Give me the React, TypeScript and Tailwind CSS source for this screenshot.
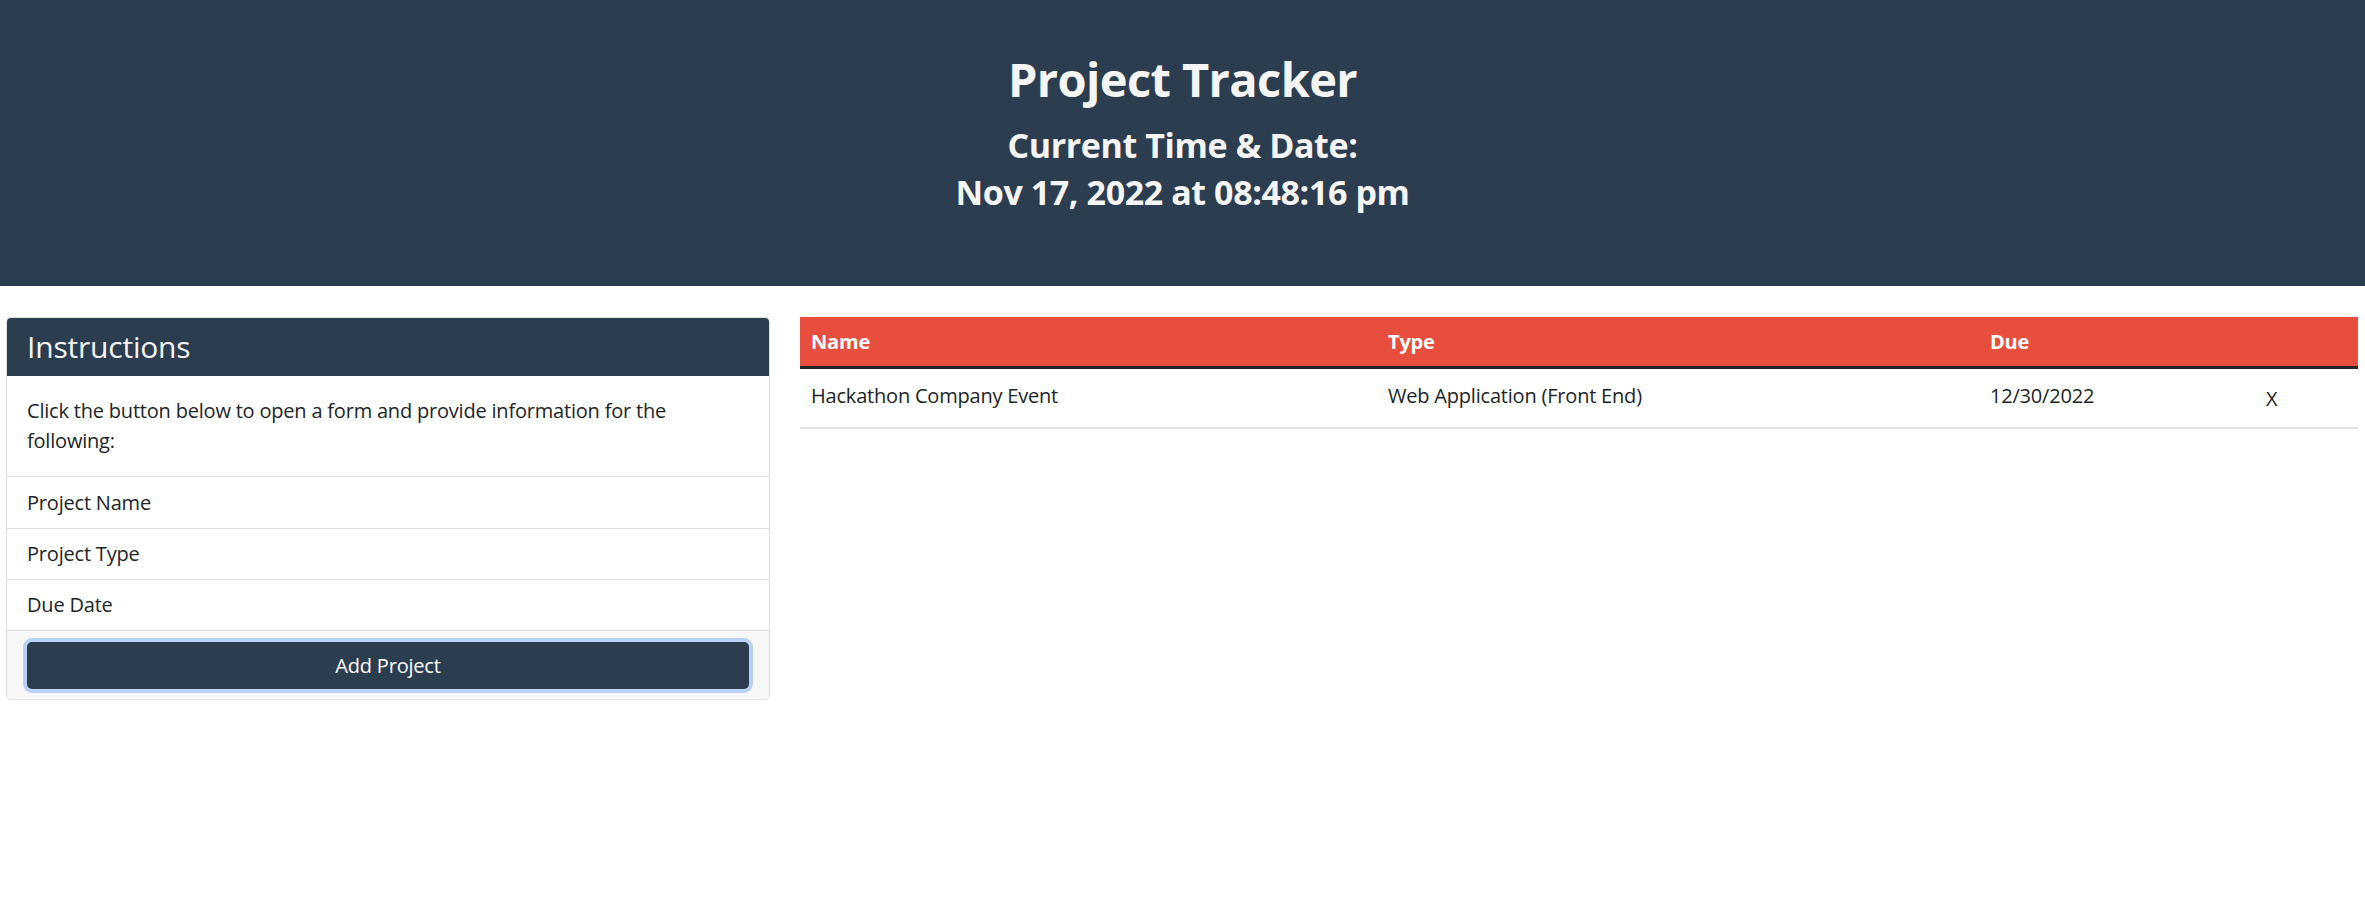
import React from "react";

export default function App() {
  const font = { fontFamily: '"Open Sans", "Noto Sans", sans-serif' };
  return (
    <div className="min-h-[908px] bg-white text-[#212529]" style={font}>
      <header className="h-[286px] bg-[#2d3d50] text-[#f5f5f5] flex flex-col items-center pt-[48px]">
        <h1 className="text-[47px] font-bold leading-[62px] tracking-[-0.6px]">Project Tracker</h1>
        <h2 className="text-[34px] font-bold leading-[46px] mt-[12px] tracking-[-0.4px]">Current Time &amp; Date:</h2>
        <h2 className="text-[34px] font-bold leading-[48px] tracking-[-0.4px]">Nov 17, 2022 at 08:48:16 pm</h2>
      </header>
      <main className="flex pt-[31px] pl-[6px] pr-[7px] gap-[30px] items-start">
        <section className="w-[764px] shrink-0 border border-[#dfdfdf] rounded-[5px] overflow-hidden">
          <div className="h-[58px] bg-[#2d3d50] text-[#f5f5f5] text-[30px] font-normal px-[20px] pb-[2px] flex items-center tracking-[-0.2px]">Instructions</div>
          <div className="px-[20px] pt-[20px] pb-[20px] text-[20px] leading-[30px] border-b border-[#e0e0e0] tracking-[-0.2px]">
            Click the button below to open a form and provide information for the following:
          </div>
          <div className="px-[20px] h-[52px] flex items-center text-[20px] border-b border-[#e0e0e0] tracking-[-0.2px]">Project Name</div>
          <div className="px-[20px] h-[51px] flex items-center text-[20px] border-b border-[#e0e0e0] tracking-[-0.2px]">Project Type</div>
          <div className="px-[20px] h-[51px] flex items-center text-[20px] border-b border-[#e0e0e0] tracking-[-0.2px]">Due Date</div>
          <div className="bg-[#f7f7f7] px-[20px] pt-[11px] pb-[10px]">
            <button className="w-full h-[47px] rounded-[5px] bg-[#2d3d50] text-white text-[20px] ring-[4px] ring-[#b9d1f5] tracking-[-0.2px]">Add Project</button>
          </div>
        </section>
        <section className="flex-1">
          <table className="w-full border-collapse text-[20px] tracking-[-0.2px]">
            <thead>
              <tr className="bg-[#e74e3e] text-white h-[50px] border-b-[3px] border-[#222428]">
                <th className="text-left font-bold px-[11px] pt-[2px] w-[577px]">Name</th>
                <th className="text-left font-bold px-[11px] pt-[2px] w-[602px]">Type</th>
                <th className="text-left font-bold px-[11px] pt-[2px] w-[276px]">Due</th>
                <th className="text-left font-bold px-[11px]"></th>
              </tr>
            </thead>
            <tbody>
              <tr className="h-[61px] border-b-[2px] border-[#dee2e6]">
                <td className="px-[11px] pb-[4px]">Hackathon Company Event</td>
                <td className="px-[11px] pb-[4px]">Web Application (Front End)</td>
                <td className="px-[11px] pb-[4px]">12/30/2022</td>
                <td className="px-[11px] pt-[2px]">X</td>
              </tr>
            </tbody>
          </table>
        </section>
      </main>
    </div>
  );
}
